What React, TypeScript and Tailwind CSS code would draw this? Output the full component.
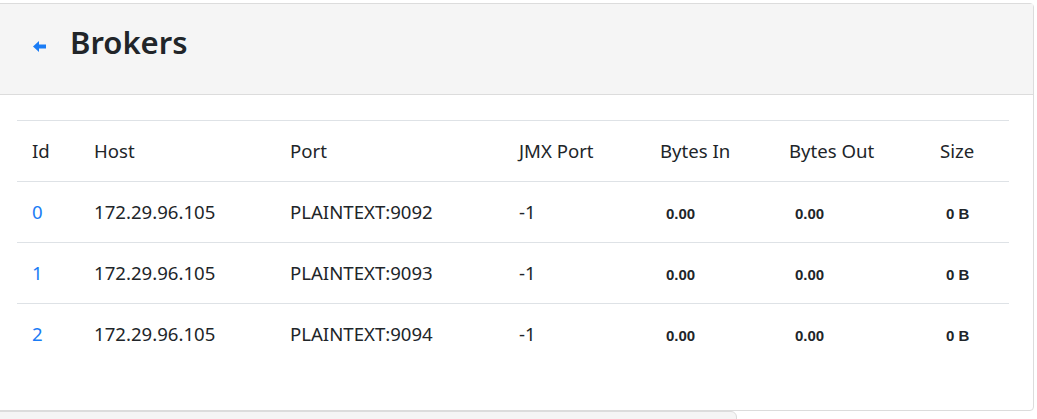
import React from "react";

const rows = [
  { id: "0", host: "172.29.96.105", port: "PLAINTEXT:9092" },
  { id: "1", host: "172.29.96.105", port: "PLAINTEXT:9093" },
  { id: "2", host: "172.29.96.105", port: "PLAINTEXT:9094" },
];

const boldFont = { fontFamily: '"Liberation Sans", Arial, sans-serif' };

export default function App() {
  return (
    <div className="w-[1037px] h-[419px] overflow-hidden bg-white pt-[3px] text-[#212529]" style={{ fontFamily: '"Noto Sans", "Open Sans", sans-serif' }}>
      <div className="-ml-px w-[1035px] border border-[#dcdcdc] rounded-r-[4px] bg-white">
        <div className="h-[91px] bg-[#f5f5f5] border-b border-[#dcdcdc] flex items-center pl-[33px] pb-[14px]">
          <svg width="14" height="11" viewBox="0 0 14 11" className="mt-[8px]">
            <path d="M0 5.5 L6 0 V3.5 H13 V7.5 H6 V11 Z" fill="#1a7cf5" />
          </svg>
          <h2 className="ml-[23px] text-[31px] font-semibold leading-none text-[#212529]">Brokers</h2>
        </div>
        <div className="pt-[25px] pb-[45px] pl-[17px]">
          <table className="w-[992px] border-collapse text-[18.6px] table-fixed">
            <colgroup>
              <col className="w-[62px]" />
              <col className="w-[196px]" />
              <col className="w-[229px]" />
              <col className="w-[141px]" />
              <col className="w-[129px]" />
              <col className="w-[151px]" />
              <col className="w-[84px]" />
            </colgroup>
            <thead>
              <tr className="h-[61px] border-t border-b border-[#dee2e6] text-left">
                <th className="font-normal pl-[15px]">Id</th>
                <th className="font-normal pl-[15px]">Host</th>
                <th className="font-normal pl-[15px]">Port</th>
                <th className="font-normal pl-[15px]">JMX Port</th>
                <th className="font-normal pl-[15px]">Bytes In</th>
                <th className="font-normal pl-[15px]">Bytes Out</th>
                <th className="font-normal pl-[15px]">Size</th>
              </tr>
            </thead>
            <tbody>
              {rows.map((r, i) => (
                <tr key={r.id} className={"h-[61px] " + (i < rows.length - 1 ? "border-b border-[#dee2e6]" : "")}>
                  <td className="pl-[15px] text-[#1a7cf5]">{r.id}</td>
                  <td className="pl-[15px]">{r.host}</td>
                  <td className="pl-[15px]">{r.port}</td>
                  <td className="pl-[15px]">-1</td>
                  <td className="pl-[21px]">
                    <span className="text-[15px] font-bold" style={boldFont}>0.00</span>
                  </td>
                  <td className="pl-[21px]">
                    <span className="text-[15px] font-bold" style={boldFont}>0.00</span>
                  </td>
                  <td className="pl-[21px]">
                    <span className="text-[15px] font-bold" style={boldFont}>0 B</span>
                  </td>
                </tr>
              ))}
            </tbody>
          </table>
        </div>
      </div>
      <div className="-ml-px w-[738px] h-[20px] border border-[#dcdcdc] rounded-tr-[6px] bg-[#f5f5f5]" />
    </div>
  );
}
